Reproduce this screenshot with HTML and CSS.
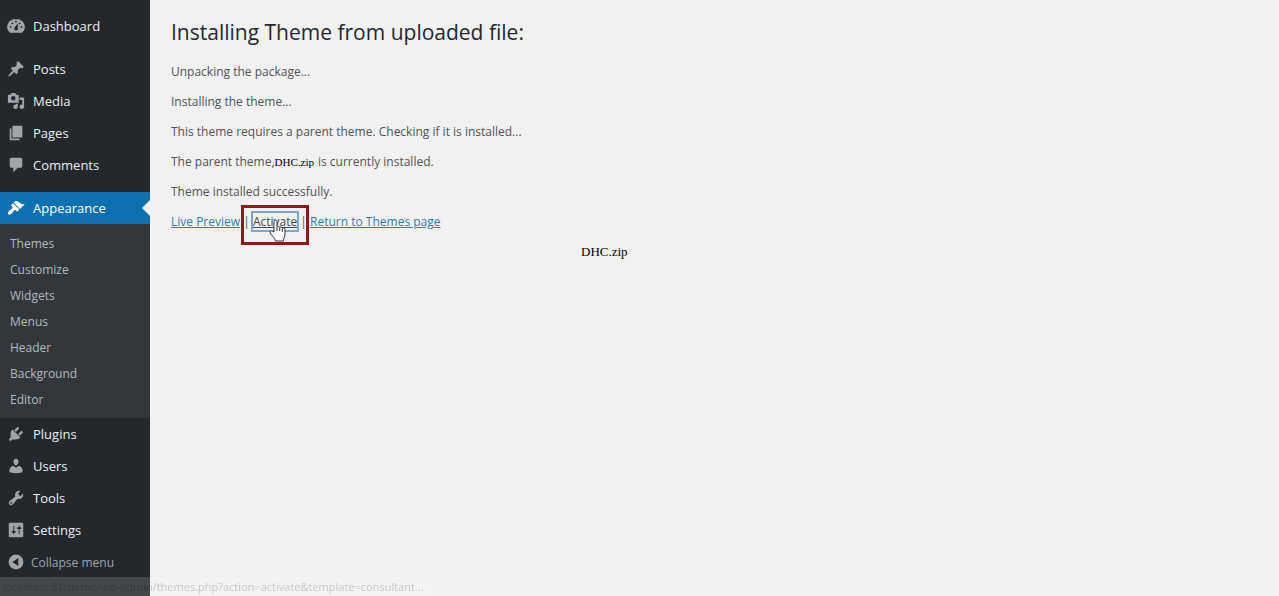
FILE: index.html
```html
<!DOCTYPE html>
<html lang="en">
<head>
<meta charset="utf-8">
<title>Installing Theme</title>
<link rel="stylesheet" href="styles.css">
</head>
<body>
<div class="layout">
  <nav class="sidebar" aria-label="Main menu">
    <ul class="menu">
      <li><a class="item" href="#"><svg class="icon" viewBox="0 0 20 20"><path fill-rule="evenodd" d="M3.2 17.500h13.600A8.600 8.600 0 0 0 10 2.500a8.600 8.600 0 0 0-6.800 15zM10 4a1 1 0 1 1 0 2 1 1 0 0 1 0-2zM6 6a1 1 0 1 1 0 2 1 1 0 0 1 0-2zm8 0a1 1 0 1 1 0 2 1 1 0 0 1 0-2zm-5.400 5.550L12 7v6c0 1.100-.9 2-2 2s-2-.9-2-2c0-.57.24-1.080.6-1.450zM4 10a1 1 0 1 1 0 2 1 1 0 0 1 0-2zm12 0a1 1 0 1 1 0 2 1 1 0 0 1 0-2z"/></svg>Dashboard</a></li>
      <li class="group"><a class="item" href="#"><svg class="icon" viewBox="0 0 20 20"><path d="M10.44 3.02l1.82-1.82 6.36 6.35-1.83 1.82c-1.05-.68-2.48-.57-3.41.36l-.75.75c-.92.93-1.04 2.35-.35 3.41l-1.83 1.82-2.41-2.41-2.8 2.79c-.42.42-3.38 2.71-3.8 2.29s1.86-3.39 2.28-3.81l2.79-2.79L4.1 9.36l1.83-1.82c1.05.69 2.48.57 3.4-.36l.75-.75c.93-.92 1.05-2.35.36-3.41z"/></svg>Posts</a></li>
      <li><a class="item" href="#"><svg class="icon" viewBox="0 0 20 20"><path fill-rule="evenodd" d="M13 11V4c0-.55-.45-1-1-1h-1.67L9 1H5L3.67 3H2c-.55 0-1 .45-1 1v7c0 .55.45 1 1 1h10c.55 0 1-.45 1-1zM7 4.5a2.5 2.5 0 1 1 0 5 2.5 2.5 0 0 1 0-5zM14 6h5v10.5a2.5 2.5 0 1 1-2-2.45V9h-3V6zm-4 8.05V13h2v3.5a2.5 2.5 0 1 1-2-2.45z"/></svg>Media</a></li>
      <li><a class="item" href="#"><svg class="icon" viewBox="0 0 20 20"><path d="M6 15V2h11v13H6zm-1 1h9v2H3V5h2v11z"/></svg>Pages</a></li>
      <li><a class="item" href="#"><svg class="icon" viewBox="0 0 20 20"><path d="M5 2h10c1.1 0 2 .9 2 2v7c0 1.1-.9 2-2 2h-3l-5 5v-5H5c-1.1 0-2-.9-2-2V4c0-1.1.9-2 2-2z"/></svg>Comments</a></li>
      <li class="group">
        <a class="item current" href="#" aria-current="page"><svg class="icon" viewBox="0 0 20 20"><path d="M14.48 11.06L7.41 3.99l1.5-1.5c.5-.56 2.3-.47 3.51.32 1.21.8 1.43 1.28 2.91 2.1 1.18.64 2.45 1.26 4.45.85zm-.71.71L6.7 4.7 4.93 6.47c-.39.39-.39 1.02 0 1.41l1.06 1.06c.39.39.39 1.03 0 1.42-.6.6-1.43 1.11-2.21 1.69-.35.26-.7.53-1.01.84C1.43 14.23.4 16.08 1.4 17.07c.99 1 2.84-.03 4.18-1.36.31-.31.58-.66.85-1.02.57-.78 1.08-1.61 1.69-2.21.39-.39 1.02-.39 1.41 0l1.06 1.06c.39.39 1.02.39 1.41 0z"/></svg>Appearance</a>
        <ul class="submenu">
          <li><a href="#">Themes</a></li>
          <li><a href="#">Customize</a></li>
          <li><a href="#">Widgets</a></li>
          <li><a href="#">Menus</a></li>
          <li><a href="#">Header</a></li>
          <li><a href="#">Background</a></li>
          <li><a href="#">Editor</a></li>
        </ul>
      </li>
      <li><a class="item" href="#"><svg class="icon" viewBox="0 0 20 20"><path d="M13.11 4.36L9.87 7.6 8 5.73l3.24-3.24c.35-.34 1.05-.2 1.56.32.52.51.66 1.21.31 1.55zm-8 1.77l.91-1.12 9.01 9.01-1.19.84c-.71.71-2.63 1.16-3.82 1.16H6.14L4.9 17.26c-.59.59-1.54.59-2.12 0-.59-.58-.59-1.53 0-2.12l1.24-1.24v-3.88c0-1.13.4-3.19 1.09-3.89zm7.26 3.97l3.24-3.24c.34-.35 1.04-.21 1.55.31.52.51.66 1.21.31 1.55l-3.24 3.25z"/></svg>Plugins</a></li>
      <li><a class="item" href="#"><svg class="icon" viewBox="0 0 20 20"><path d="M10 9.25c-2.27 0-2.73-3.44-2.73-3.44C7 4.02 7.82 2 9.97 2c2.16 0 2.98 2.02 2.71 3.81 0 0-.41 3.44-2.68 3.44zm0 2.57L12.72 10c2.39 0 4.52 2.33 4.52 4.53v2.49s-3.65 1.13-7.24 1.13c-3.65 0-7.24-1.13-7.24-1.13v-2.49c0-2.25 1.94-4.48 4.47-4.48z"/></svg>Users</a></li>
      <li><a class="item" href="#"><svg class="icon" viewBox="0 0 20 20"><path fill-rule="evenodd" d="M16.68 9.77c-1.34 1.34-3.3 1.67-4.95.99l-5.41 6.52c-.99.99-2.59.99-3.58 0s-.99-2.59 0-3.57l6.52-5.42c-.68-1.65-.35-3.61.99-4.95 1.28-1.28 3.12-1.62 4.72-1.06l-2.89 2.89 2.82 2.82 2.86-2.87c.53 1.58.18 3.39-1.08 4.65zM3.81 16.21c.4.39 1.04.39 1.43 0 .4-.4.4-1.04 0-1.43-.39-.4-1.03-.4-1.43 0-.39.39-.39 1.03 0 1.43z"/></svg>Tools</a></li>
      <li><a class="item" href="#"><svg class="icon" viewBox="0 0 20 20"><path fill-rule="evenodd" d="M18 17V3c0-.55-.45-1-1-1H3c-.55 0-1 .45-1 1v14c0 .55.45 1 1 1h14c.55 0 1-.45 1-1zM8 11h1c.55 0 1 .45 1 1s-.45 1-1 1H8v1.5c0 .28-.22.5-.5.5s-.5-.22-.5-.5V13H6c-.55 0-1-.45-1-1s.45-1 1-1h1V5.5c0-.28.22-.5.5-.5s.5.22.5.5V11zm5-2h-1c-.55 0-1-.45-1-1s.45-1 1-1h1V5.5c0-.28.22-.5.5-.5s.5.22.5.5V7h1c.55 0 1 .45 1 1s-.45 1-1 1h-1v5.5c0 .28-.22.5-.5.5s-.5-.22-.5-.5V9z"/></svg>Settings</a></li>
    </ul>
    <button class="collapse" type="button"><svg class="icon" viewBox="0 0 20 20"><path fill-rule="evenodd" d="M10 1.800a8.200 8.200 0 1 1 0 16.400 8.200 8.200 0 0 1 0-16.400zM12.500 5.500L6 10l6.500 4.500z"/></svg>Collapse menu</button>
  </nav>
  <main class="content">
    <h1>Installing Theme from uploaded file:</h1>
    <p>Unpacking the package...</p>
    <p>Installing the theme...</p>
    <p>This theme requires a parent theme. Checking if it is installed...</p>
    <p>The parent theme,<span class="parent-name">DHC.zip</span>is currently installed.</p>
    <p>Theme installed successfully.</p>
    <p><a href="#">Live Preview</a> | <a class="activate" href="#">Activate<span class="marker"></span><svg class="pointer" viewBox="0 0 18 23"><path fill="#fff" stroke="#333" stroke-width="1" stroke-linejoin="round" d="M5 13V2.500C5 .6 8 .6 8 2.500V8c.3-1 2.700-1 2.700.6.400-1 2.500-.8 2.600.7.500-.8 2.700-.5 2.700 1.200V15c0 2.500-1.500 3.500-1.500 7H6.500c0-2-3.500-5-5.300-8-1-1.800 1-2.900 2.300-1.700z"/><path fill="none" stroke="#333" d="M8 8v4M10.700 9v3M13.300 10v3"/></svg></a> | <a href="#">Return to Themes page</a></p>
    <p class="file-name">DHC.zip</p>
  </main>
</div>
<div class="status">localhost:81/demo/wp-admin/themes.php?action=activate&amp;template=consultant...</div>
</body>
</html>
```
FILE: styles.css
```css
* { box-sizing: border-box; }

body {
  margin: 0;
  background: #f1f1f1;
  color: #505357;
  font: 12px/18px "Open Sans", "Noto Sans", sans-serif;
}

ul { list-style: none; margin: 0; padding: 0; }

.layout { display: flex; min-height: 100vh; }

.sidebar {
  flex: none;
  width: 150px;
  padding-top: 10px;
  background: #23282d;
}

.group { margin-top: 11px; }

.item, .collapse {
  display: flex;
  align-items: center;
  gap: 8px;
  width: 100%;
  height: 32px;
  padding: 0 7px;
  color: #eee;
  font-size: 13px;
  text-decoration: none;
}

.collapse {
  gap: 6px;
  border: 0;
  background: none;
  color: #a0a5aa;
  font-family: inherit;
  font-size: 12px;
}

.icon { flex: none; width: 18px; height: 18px; fill: #a0a5aa; }

.current { position: relative; background: #0e70ae; color: #fff; }
.current .icon { fill: #fff; }
.current::after {
  content: "";
  position: absolute;
  right: 0;
  top: 8px;
  border: 8px solid transparent;
  border-left: 0;
  border-right-color: #f1f1f1;
}

.submenu { padding: 7px 0 5px; background: #32373c; }
.submenu a {
  display: block;
  padding: 0 10px;
  color: #b4b9be;
  line-height: 26px;
  text-decoration: none;
}

.content { flex: 1; padding: 18px 21px; }
.content h1 {
  margin: 0 0 17px;
  color: #23282d;
  font-size: 21px;
  font-weight: 400;
  line-height: 28px;
}
.content p { margin: 0 0 12px; }
.content a { color: #2a7fb5; }

.parent-name {
  margin-right: 4px;
  color: #000;
  font: 11px/16px "Liberation Serif", serif;
}

.content .activate {
  position: relative;
  color: #43484d;
  outline: 2px solid #7ba7cc;
}
.marker {
  position: absolute;
  inset: -8px -12px -15px;
  border: 3px solid #8b1a1a;
}
.pointer { position: absolute; left: 16px; top: 6px; width: 18px; height: 23px; }

.content .file-name {
  padding-left: 410px;
  color: #000;
  font: 13px/18px "Liberation Serif", serif;
}

.status {
  position: fixed;
  left: 0;
  bottom: 0;
  padding: 0 8px 0 2px;
  background: rgba(255, 255, 255, 0.15);
  color: rgba(0, 0, 0, 0.2);
  font-size: 11px;
  line-height: 19px;
}
```
